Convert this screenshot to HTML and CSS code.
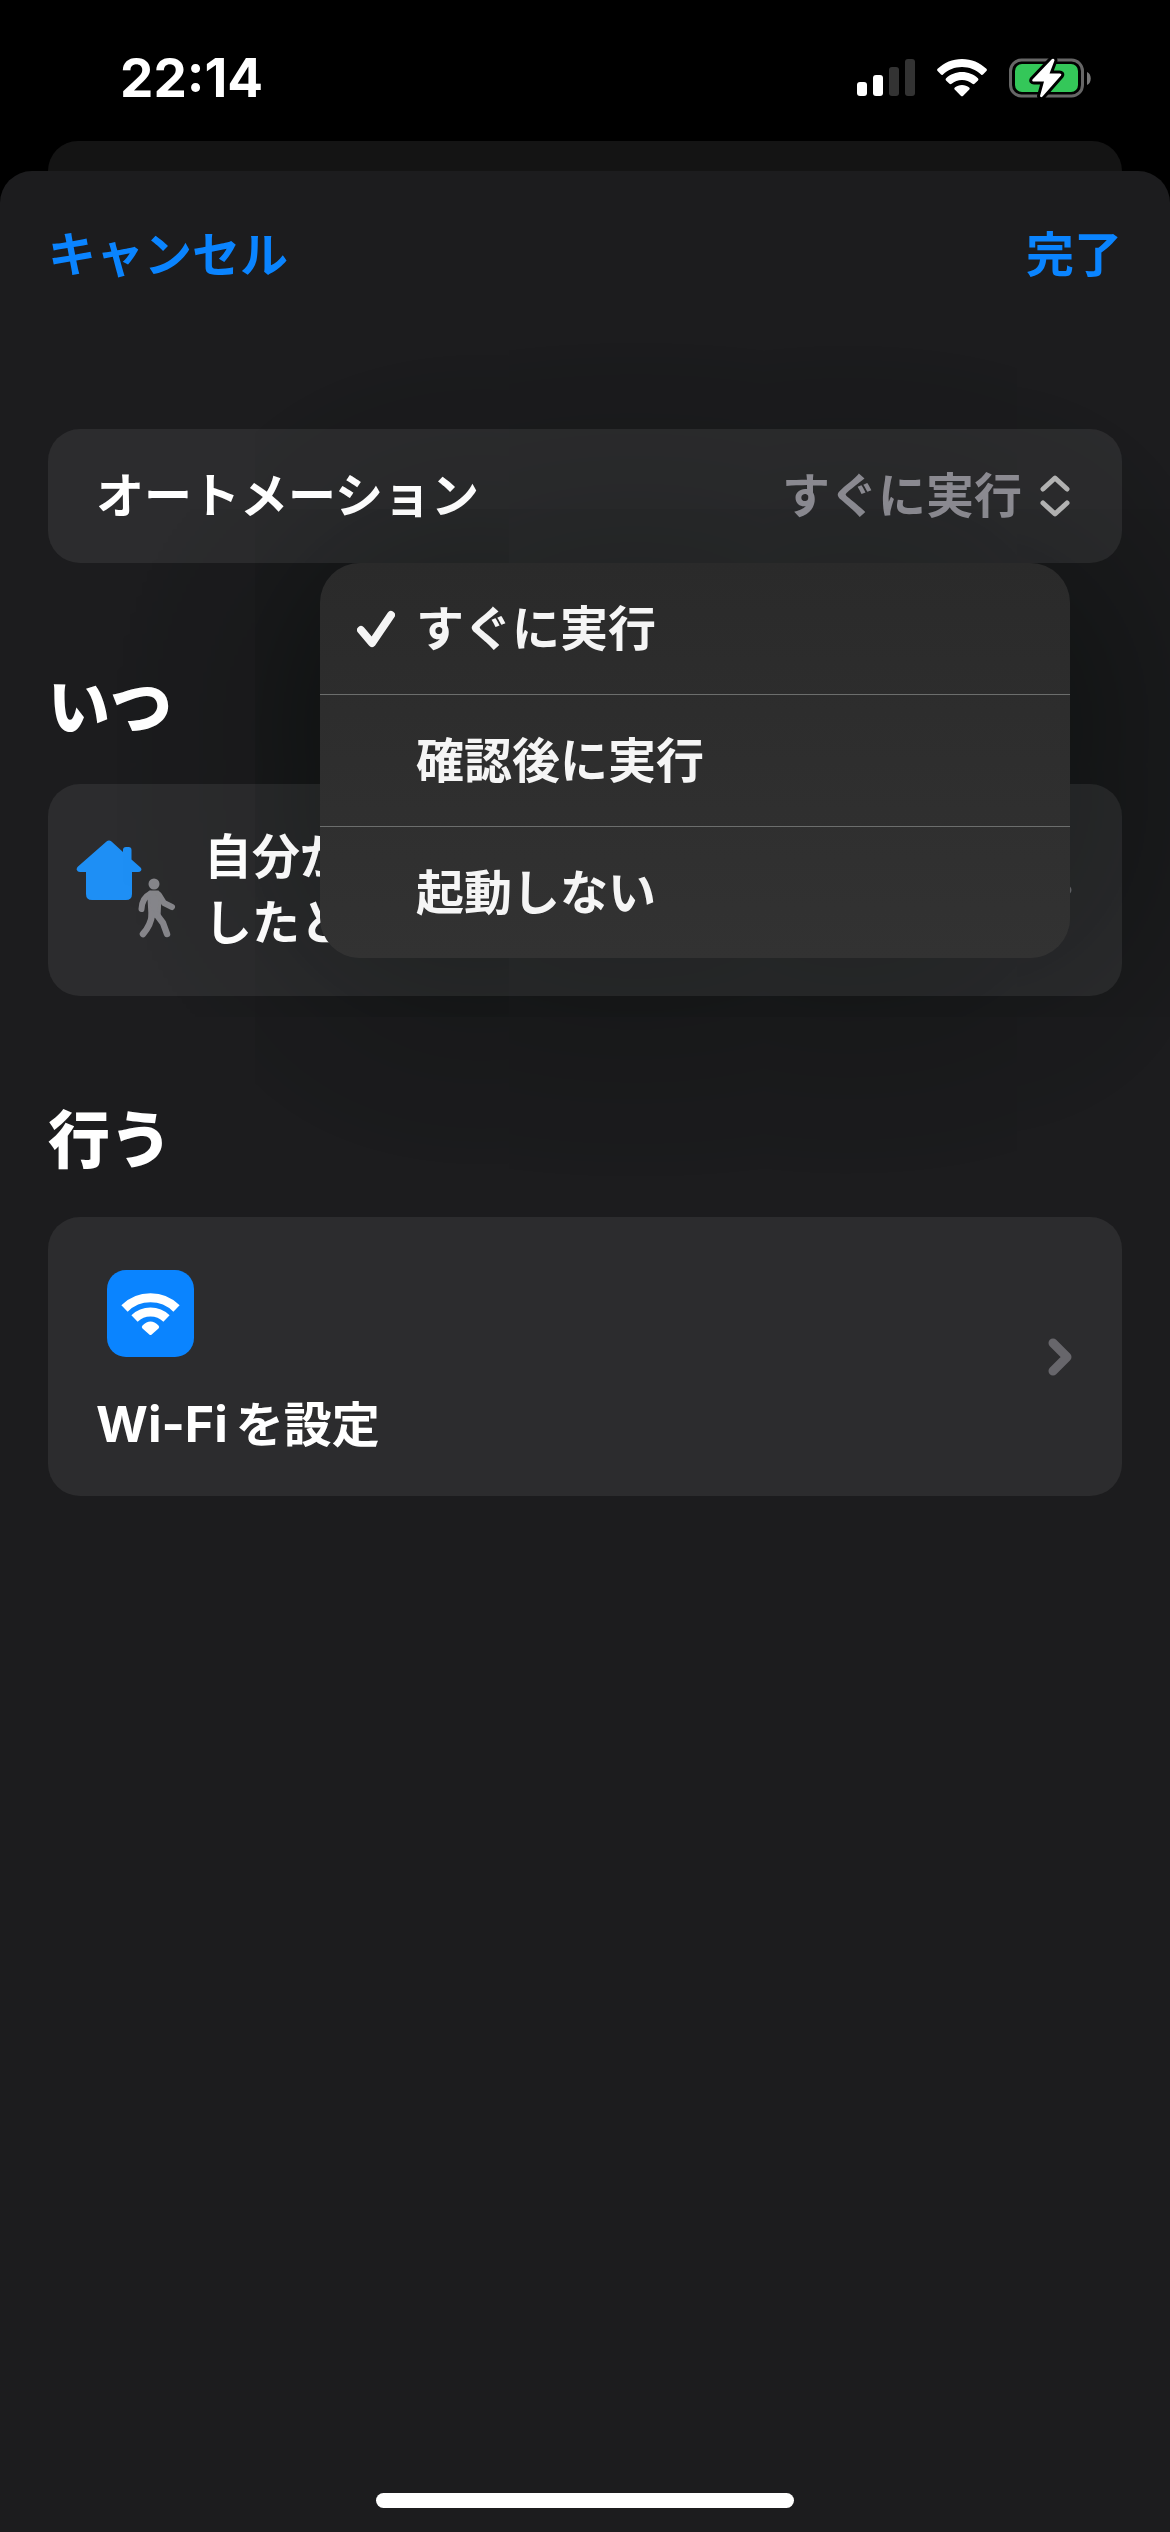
FILE: index.html
```html
<!DOCTYPE html>
<html lang="ja">
<head>
<meta charset="utf-8">
<meta name="viewport" content="width=device-width, initial-scale=1">
<title>オートメーション</title>
<link rel="stylesheet" href="styles.css">
</head>
<body>
<div class="status">
  <time class="clock">22:14</time>
  <div class="indicators">
    <svg width="58" height="38" viewBox="0 0 58 38" role="img" aria-label="電波">
      <rect x="0" y="23" width="10" height="14" rx="3" fill="#fff"/>
      <rect x="16" y="16" width="10" height="21" rx="3" fill="#fff"/>
      <rect x="32" y="8" width="10" height="29" rx="3" fill="#333"/>
      <rect x="48" y="0" width="10" height="37" rx="3" fill="#333"/>
    </svg>
    <svg width="50" height="38" viewBox="0 0 50 38" fill="#fff" role="img" aria-label="Wi-Fi">
      <path d="M25 0C34.500 0 43 3.700 49.400 9.800Q50.400 10.900 49.400 12L46 15.500Q45 16.400 44 15.400C38.900 10.700 32.300 8 25 8S11.100 10.700 6 15.400Q5 16.400 4 15.500L.6 12Q-.4 10.900 .6 9.800C7 3.700 15.500 0 25 0Z"/>
      <path d="M25 13C31.100 13 36.700 15.300 40.900 19.200Q42 20.300 41 21.400L37.500 24.800Q36.500 25.700 35.400 24.800C32.600 22.400 29 21 25 21S17.400 22.400 14.600 24.800Q13.500 25.700 12.500 24.800L9 21.400Q8 20.300 9.100 19.200C13.300 15.300 18.900 13 25 13Z"/>
      <path d="M25 26C27.700 26 30.200 26.900 32.200 28.500Q33.300 29.500 32.300 30.600L26.200 36.700Q25 37.800 23.800 36.700L17.700 30.600Q16.700 29.500 17.800 28.500C19.800 26.900 22.300 26 25 26Z"/>
    </svg>
    <svg width="83" height="42" viewBox="0 0 83 42" role="img" aria-label="充電中">
      <rect x="1.500" y="3" width="72" height="36" rx="11" fill="none" stroke="#666" stroke-width="3"/>
      <rect x="6" y="7" width="63" height="28" rx="7" fill="#34c759"/>
      <path d="M78 15C83 17 83 26 78 28Z" fill="#777"/>
      <path d="M43 2 23.500 22.500Q22.500 24.500 25 24.500H35L31 39Q31.500 41 33.500 39.500L52 18.500Q53 16.500 50.500 16.500H40.500L45.500 3.500Q45.500 1 43 2Z" fill="#fff" stroke="#000" stroke-width="6" stroke-linejoin="round" paint-order="stroke"/>
    </svg>
  </div>
</div>
<div class="back-sheet"></div>
<main class="sheet">
  <nav class="nav">
    <button class="nav-button" type="button">キャンセル</button>
    <button class="nav-button done" type="button">完了</button>
  </nav>

  <div class="card setting">
    <span id="run-label">オートメーション</span>
    <button class="picker" type="button" aria-haspopup="menu" aria-expanded="true" aria-labelledby="run-label run-value">
      <span id="run-value">すぐに実行</span>
      <svg width="30" height="42" viewBox="0 0 30 42" fill="none" stroke="#b4b4b4" stroke-width="5" stroke-linecap="round" stroke-linejoin="round" aria-hidden="true">
        <path d="M3 14 15 3 27 14M3 28 15 39 27 28"/>
      </svg>
    </button>
    <div class="popover">
      <div class="menu" role="menu" aria-labelledby="run-label">
        <button class="menu-item" type="button" role="menuitemradio" aria-checked="true">
          <svg width="38" height="38" viewBox="0 0 38 38" fill="none" stroke="#f5f5f5" stroke-width="8" stroke-linecap="round" stroke-linejoin="round" aria-hidden="true">
            <path d="M4 20 15 33 34 5"/>
          </svg>
          <span>すぐに実行</span>
        </button>
        <button class="menu-item" type="button" role="menuitemradio" aria-checked="false"><span>確認後に実行</span></button>
        <button class="menu-item" type="button" role="menuitemradio" aria-checked="false"><span>起動しない</span></button>
      </div>
    </div>
  </div>

  <h2 class="heading">いつ</h2>
  <button class="card trigger" type="button">
    <svg class="trigger-icon" width="100" height="100" viewBox="0 0 100 100" aria-hidden="true">
      <path fill="#1e8ff5" d="M30.500 1.500Q33 -.5 35.500 1.500L47 12V10Q47 7 50 7H52.500Q55.500 7 55.500 10V19.500L64.500 27.500Q66 29 65 30.700Q64 32 62 32H56V54Q56 60 50 60H16Q10 60 10 54V32H4Q1.500 32 .8 30Q.2 28.300 2 26.500Z"/>
      <g fill="none" stroke="#87868b" stroke-linecap="round" stroke-linejoin="round">
        <circle cx="78" cy="44" r="5.500" fill="#87868b" stroke="none"/>
        <path d="M74 52H82L84 58 83 76H74L73 58Z" fill="#87868b" stroke-width="3"/>
        <path d="M74 54Q66 58 65.500 69M83 55 88 63 96 67" stroke-width="6"/>
        <path d="M76 74Q75 85 67 94M81 75 87 83 91 94" stroke-width="6.500"/>
      </g>
    </svg>
    <span class="trigger-text">自分が<br>したとき</span>
    <svg class="chevron" width="24" height="38" viewBox="0 0 24 38" aria-hidden="true"><path d="M5 5 19 19 5 33"/></svg>
  </button>

  <h2 class="heading">行う</h2>
  <button class="card action" type="button">
    <span class="action-body">
      <svg class="action-icon" width="87" height="87" viewBox="0 0 87 87" aria-hidden="true">
        <rect width="87" height="87" rx="19" fill="#0a84ff"/>
        <g fill="none" stroke="#fff">
          <path d="M17.500 38.500A37 37 0 0 1 69.500 38.500" stroke-width="9"/>
          <path d="M27.500 48.500A23 23 0 0 1 59.500 48.500" stroke-width="9"/>
        </g>
        <path d="M35.500 55.500Q43.500 47.500 51.500 55.500Q53 57 51.500 58.500L44.700 64.500Q43.500 65.600 42.300 64.500L35.500 58.500Q34 57 35.500 55.500Z" fill="#fff"/>
      </svg>
      <span class="action-title"><span class="latin">Wi-Fi</span>を設定</span>
    </span>
    <svg class="chevron" width="24" height="38" viewBox="0 0 24 38" aria-hidden="true"><path d="M5 5 19 19 5 33"/></svg>
  </button>

  <div class="home-indicator"></div>
</main>
</body>
</html>
```

FILE: styles.css
```css
* {
  box-sizing: border-box;
}

body {
  margin: 0;
  min-height: 100vh;
  display: flex;
  flex-direction: column;
  background: #000;
  color: #fff;
  font-family: Inter, "Noto Sans CJK JP", sans-serif;
  font-size: 48px;
  font-weight: 600;
}

button {
  margin: 0;
  padding: 0;
  border: 0;
  background: none;
  color: inherit;
  font: inherit;
  text-align: left;
}

svg {
  display: block;
  flex: none;
}

.status {
  display: flex;
  justify-content: space-between;
  align-items: center;
  height: 141px;
  padding: 15px 78px 0 120px;
}

.clock {
  font-size: 53px;
  font-weight: 700;
}

.indicators {
  display: flex;
  align-items: center;
  gap: 22px;
}

.back-sheet {
  height: 30px;
  margin: 0 48px;
  border-radius: 30px 30px 0 0;
  background: #141414;
}

.sheet {
  flex: 1;
  display: flex;
  flex-direction: column;
  padding: 0 48px 24px;
  border-radius: 32px 32px 0 0;
  background: #1c1c1e;
  overflow: hidden;
}

.nav {
  display: flex;
  justify-content: space-between;
  align-items: center;
  height: 168px;
  margin-bottom: 90px;
}

.nav-button {
  color: #0a84ff;
  line-height: 66px;
}

.done {
  font-weight: 700;
}

.card {
  display: flex;
  align-items: center;
  justify-content: space-between;
  border-radius: 32px;
  background: #2c2c2e;
  line-height: 66px;
}

.setting {
  position: relative;
  padding: 34px 52px 34px 48px;
}

.picker {
  display: flex;
  align-items: center;
  gap: 18px;
  color: #8e8d94;
}

.popover {
  position: absolute;
  top: 100%;
  right: 52px;
  width: 750px;
}

/* Burns the dark surfaces around the menu while leaving text bright. */
.popover::before {
  content: "";
  position: absolute;
  inset: 0;
  z-index: 1;
  border-radius: 40px;
  box-shadow: 0 0 280px rgb(232, 237, 233);
  mix-blend-mode: color-burn;
}

.menu {
  position: relative;
  z-index: 2;
  border-radius: 40px;
  background: linear-gradient(#2a2a2a, #323232);
  box-shadow: 0 0 280px rgba(0, 0, 0, 0.12);
}

.menu-item {
  display: flex;
  align-items: center;
  gap: 21px;
  width: 100%;
  height: 131px;
  padding-left: 96px;
  color: #f5f5f5;
}

.menu-item[aria-checked="true"] {
  padding-left: 37px;
}

.menu-item + .menu-item {
  height: 132px;
  border-top: 1px solid #6c6e6d;
}

.heading {
  margin: 105px 0 36px;
  font-size: 62px;
  font-weight: 900;
  line-height: 80px;
}

.trigger {
  gap: 28px;
  padding: 40px 50px 40px 28px;
}

.trigger-text {
  flex: 1;
}

.chevron {
  fill: none;
  stroke: #67666b;
  stroke-width: 9;
  stroke-linecap: round;
  stroke-linejoin: round;
}

.action {
  padding: 40px 50px 40px 48px;
}

.action-body {
  display: flex;
  flex-direction: column;
  gap: 35px;
  padding-top: 13px;
}

.action-icon {
  margin-left: 11px;
}

.action-title {
  height: 64px;
  font-weight: 700;
  line-height: 64px;
}

.latin {
  margin-right: 8px;
  font-size: 50px;
}

.home-indicator {
  width: 39%;
  min-width: 120px;
  height: 15px;
  margin: auto auto 0;
  border-radius: 8px;
  background: #fff;
}
```
